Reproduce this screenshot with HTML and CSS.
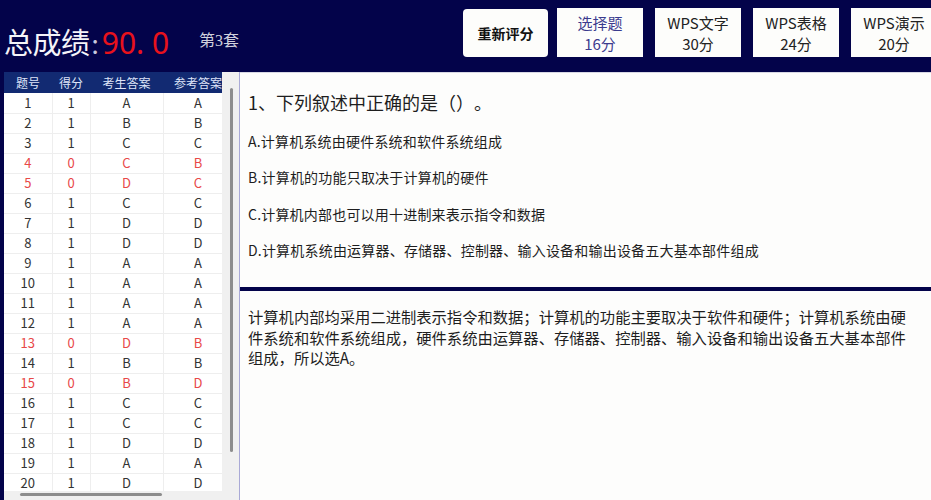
FILE: index.html
```html
<!DOCTYPE html>
<html lang="zh-CN">
<head>
<meta charset="utf-8">
<title>总成绩</title>
<link rel="stylesheet" href="styles.css">
</head>
<body>
<div class="app">
  <header class="header">
    <div class="score">
      <span class="score-label">总成绩</span><span class="score-colon">:</span><span class="score-value">90. 0</span>
    </div>
    <div class="set-name">第3套</div>
    <nav class="buttons">
      <button class="btn btn-regrade">重新评分</button>
      <button class="btn btn-cat btn-active"><span>选择题</span><span>16分</span></button>
      <button class="btn btn-cat"><span>WPS文字</span><span>30分</span></button>
      <button class="btn btn-cat"><span>WPS表格</span><span>24分</span></button>
      <button class="btn btn-cat"><span>WPS演示</span><span>20分</span></button>
    </nav>
  </header>
  <main class="main">
    <section class="left">
      <div class="left-inner">
        <div class="table-view">
          <table class="grid">
            <colgroup><col class="c1"><col class="c2"><col class="c3"><col class="c4"></colgroup>
            <thead>
              <tr><th>题号</th><th>得分</th><th>考生答案</th><th>参考答案</th></tr>
            </thead>
            <tbody>
              <tr><td>1</td><td>1</td><td>A</td><td>A</td></tr>
              <tr><td>2</td><td>1</td><td>B</td><td>B</td></tr>
              <tr><td>3</td><td>1</td><td>C</td><td>C</td></tr>
              <tr class="wrong"><td>4</td><td>0</td><td>C</td><td>B</td></tr>
              <tr class="wrong"><td>5</td><td>0</td><td>D</td><td>C</td></tr>
              <tr><td>6</td><td>1</td><td>C</td><td>C</td></tr>
              <tr><td>7</td><td>1</td><td>D</td><td>D</td></tr>
              <tr><td>8</td><td>1</td><td>D</td><td>D</td></tr>
              <tr><td>9</td><td>1</td><td>A</td><td>A</td></tr>
              <tr><td>10</td><td>1</td><td>A</td><td>A</td></tr>
              <tr><td>11</td><td>1</td><td>A</td><td>A</td></tr>
              <tr><td>12</td><td>1</td><td>A</td><td>A</td></tr>
              <tr class="wrong"><td>13</td><td>0</td><td>D</td><td>B</td></tr>
              <tr><td>14</td><td>1</td><td>B</td><td>B</td></tr>
              <tr class="wrong"><td>15</td><td>0</td><td>B</td><td>D</td></tr>
              <tr><td>16</td><td>1</td><td>C</td><td>C</td></tr>
              <tr><td>17</td><td>1</td><td>C</td><td>C</td></tr>
              <tr><td>18</td><td>1</td><td>D</td><td>D</td></tr>
              <tr><td>19</td><td>1</td><td>A</td><td>A</td></tr>
              <tr><td>20</td><td>1</td><td>D</td><td>D</td></tr>
            </tbody>
          </table>
        </div>
        <div class="hscroll"><div class="hthumb"></div></div>
      </div>
      <div class="vscroll"><div class="vthumb"></div></div>
    </section>
    <section class="right">
      <div class="question">
        <div class="q-title">1、下列叙述中正确的是（）。</div>
        <div class="q-option">A.计算机系统由硬件系统和软件系统组成</div>
        <div class="q-option">B.计算机的功能只取决于计算机的硬件</div>
        <div class="q-option">C.计算机内部也可以用十进制来表示指令和数据</div>
        <div class="q-option">D.计算机系统由运算器、存储器、控制器、输入设备和输出设备五大基本部件组成</div>
      </div>
      <div class="separator"></div>
      <div class="explain">
        <p class="explain-text">计算机内部均采用二进制表示指令和数据；计算机的功能主要取决于软件和硬件；计算机系统由硬件系统和软件系统组成，硬件系统由运算器、存储器、控制器、输入设备和输出设备五大基本部件组成，所以选A。</p>
      </div>
    </section>
  </main>
</div>
</body>
</html>
```
FILE: styles.css
```css
* { box-sizing: border-box; }

html, body {
  margin: 0;
  padding: 0;
}

body {
  width: 931px;
  height: 500px;
  overflow: hidden;
  background: #03034a;
  font-family: "Noto Sans CJK SC", "Noto Sans", sans-serif;
  color: #222;
  text-spacing-trim: space-all;
}

.app {
  width: 931px;
  height: 500px;
  display: flex;
  flex-direction: column;
}

.header {
  height: 72px;
  display: flex;
  align-items: center;
  padding-left: 4px;
}

.score {
  display: flex;
  align-items: baseline;
  line-height: 40px;
  margin-top: 12px;
}

.score-label {
  font-size: 29px;
  color: #f4f4f8;
  letter-spacing: -0.5px;
}

.score-colon {
  font-size: 26px;
  color: #c8c8dc;
  margin: 0 3px 0 2px;
}

.score-value {
  font-family: "Noto Sans", "DejaVu Sans", sans-serif;
  font-size: 30px;
  color: #e8121c;
}

.set-name {
  font-family: "Liberation Serif", "Noto Sans CJK SC", serif;
  font-size: 16px;
  color: #d0d0dc;
  margin-left: 30px;
  margin-top: 6px;
}

.buttons {
  margin-left: auto;
  display: flex;
  gap: 12px;
  align-self: flex-start;
  margin-top: 8px;
  margin-right: -6px;
}

.btn {
  font-family: "Noto Sans CJK SC", "Noto Sans", sans-serif;
  border: none;
  background: #fdfdfb;
  width: 86px;
  height: 49px;
  padding: 0;
  color: #222;
  display: flex;
  flex-direction: column;
  align-items: center;
  justify-content: center;
}

.btn-regrade {
  width: 85px;
  margin-right: -3px;
  border-radius: 4px;
  font-size: 14px;
  font-weight: bold;
  color: #111;
  margin-top: 1px;
  height: 48px;
}

.btn-cat {
  font-size: 15px;
  line-height: 21px;
}

.btn-active {
  color: #3b3b8e;
}

.main {
  flex: 1;
  display: flex;
  min-height: 0;
  padding-left: 4px;
}

.left {
  width: 235px;
  display: flex;
  background: #f0f0f0;
}

.left-inner {
  width: 218px;
  display: flex;
  flex-direction: column;
}

.table-view {
  flex: 1;
  overflow: hidden;
  background: #fff;
}

.grid {
  border-collapse: collapse;
  table-layout: fixed;
  width: 229px;
  font-size: 13px;
}

.c1 { width: 48px; }
.c2 { width: 38px; }
.c3 { width: 73px; }
.c4 { width: 70px; }

.grid th {
  height: 21px;
  padding: 0;
  background: #122a72;
  color: #dfe4f8;
  font-weight: normal;
  font-size: 12px;
  text-align: center;
  white-space: nowrap;
}

.grid td {
  height: 20px;
  padding: 0;
  line-height: 18px;
  text-align: center;
  color: #333;
  border: 1px solid #eeeeee;
  border-top: none;
  white-space: nowrap;
}

.grid td:first-child { border-left: none; }

.grid tr.wrong td {
  color: #e84848;
}

.hscroll {
  height: 9px;
  background: #f0f0f0;
  padding: 2px 0 0 16px;
}

.hthumb {
  width: 142px;
  height: 3px;
  border-radius: 2px;
  background: #8d8d8d;
}

.vscroll {
  width: 17px;
  padding: 16px 0 0 8px;
  background: #f0f0f0;
}

.vthumb {
  width: 3px;
  height: 364px;
  border-radius: 2px;
  background: #8d8d8d;
}

.right {
  flex: 1;
  display: flex;
  flex-direction: column;
  border-left: 1px solid #a9a9d6;
  background: #fdfdfc;
}

.question {
  height: 215px;
  padding: 17px 0 0 8px;
  display: flex;
  flex-direction: column;
  gap: 16.6px;
  border-top: 1px solid #d8d8e4;
}

.q-title {
  font-size: 18px;
  line-height: 24px;
  color: #1e1e1e;
}

.q-option {
  font-size: 14px;
  line-height: 20px;
  color: #1e1e1e;
  letter-spacing: 0.2px;
}

.separator {
  height: 4px;
  background: #03034a;
}

.explain {
  flex: 1;
  padding: 15px 0 0 8px;
}

.explain-text {
  margin: 0;
  width: 665px;
  font-size: 15.3px;
  line-height: 20.5px;
  color: #1e1e1e;
}
```
